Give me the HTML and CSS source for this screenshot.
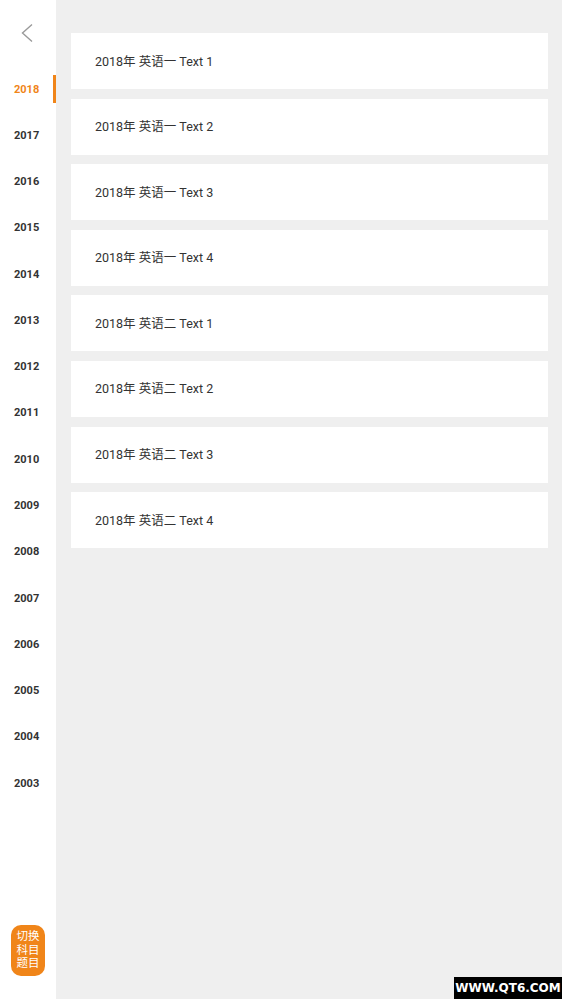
FILE: index.html
```html
<!DOCTYPE html>
<html lang="zh">
<head>
<meta charset="utf-8">
<link rel="stylesheet" href="styles.css">
</head>
<body>
<div class="app">
  <aside class="side">
    <div class="back">
      <svg width="14" height="20" viewBox="0 0 14 20"><polyline points="11,1.5 1.5,10 11,18.5" fill="none" stroke="#9a9a9a" stroke-width="1.4"/></svg>
    </div>
    <ul class="years">
      <li class="year active">2018</li>
      <li class="year">2017</li>
      <li class="year">2016</li>
      <li class="year">2015</li>
      <li class="year">2014</li>
      <li class="year">2013</li>
      <li class="year">2012</li>
      <li class="year">2011</li>
      <li class="year">2010</li>
      <li class="year">2009</li>
      <li class="year">2008</li>
      <li class="year">2007</li>
      <li class="year">2006</li>
      <li class="year">2005</li>
      <li class="year">2004</li>
      <li class="year">2003</li>
    </ul>
    <div class="switch">切换<br>科目<br>题目</div>
  </aside>
  <main class="main">
    <div class="card">2018年 英语一 Text 1</div>
    <div class="card">2018年 英语一 Text 2</div>
    <div class="card">2018年 英语一 Text 3</div>
    <div class="card">2018年 英语一 Text 4</div>
    <div class="card">2018年 英语二 Text 1</div>
    <div class="card">2018年 英语二 Text 2</div>
    <div class="card">2018年 英语二 Text 3</div>
    <div class="card">2018年 英语二 Text 4</div>
  </main>
</div>
<div class="watermark">WWW.QT6.COM</div>
</body>
</html>
```
FILE: styles.css
```css
html, body {
  margin: 0;
  padding: 0;
  height: 100%;
}
body {
  font-family: Roboto, "Noto Sans CJK SC", sans-serif;
  background: #efefef;
  overflow: hidden;
}
.app {
  display: flex;
  height: 999px;
}
.side {
  width: 56px;
  flex: none;
  background: #fff;
  display: flex;
  flex-direction: column;
  align-items: stretch;
}
.back {
  height: 66px;
  display: flex;
  justify-content: center;
  align-items: flex-start;
  padding-top: 23px;
  box-sizing: border-box;
}
.years {
  list-style: none;
  margin: 0;
  padding: 0;
}
.year {
  height: 46.27px;
  display: flex;
  align-items: center;
  padding-left: 14px;
  font-size: 11px;
  font-weight: 700;
  color: #333;
  position: relative;
}
.year.active {
  color: #f08519;
}
.year.active::after {
  content: "";
  position: absolute;
  right: 0;
  top: 9px;
  width: 3px;
  height: 28px;
  background: #f08519;
}
.switch {
  margin-top: auto;
  margin-bottom: 23px;
  margin-left: 11px;
  width: 34px;
  height: 51px;
  border-radius: 10px;
  background: #f08519;
  color: #fff;
  font-size: 11.5px;
  line-height: 13.5px;
  text-align: center;
  display: flex;
  align-items: center;
  justify-content: center;
  box-sizing: border-box;
}
.main {
  flex: 1;
  padding: 33px 14px 0 15px;
  display: flex;
  flex-direction: column;
  gap: 9.6px;
}
.card {
  background: #fff;
  height: 56px;
  box-sizing: border-box;
  padding-bottom: 2px;
  display: flex;
  align-items: center;
  padding-left: 24px;
  font-size: 12.5px;
  color: #333;
}
.watermark {
  position: absolute;
  right: 0;
  bottom: 0;
  width: 108px;
  height: 22px;
  background: #000;
  color: #fff;
  font-family: "DejaVu Sans", sans-serif;
  font-weight: 700;
  font-size: 12px;
  display: flex;
  align-items: center;
  justify-content: center;
}
```
